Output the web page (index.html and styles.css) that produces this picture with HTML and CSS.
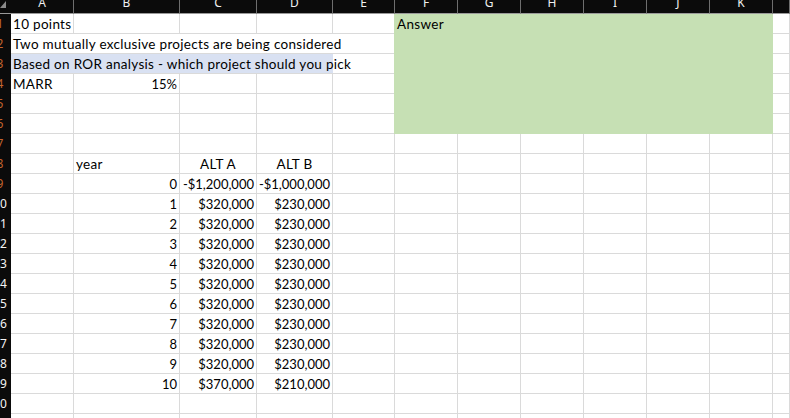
FILE: index.html
```html
<!DOCTYPE html>
<html>
<head>
<meta charset="utf-8">
<link rel="stylesheet" href="styles.css">
</head>
<body>
<div class="sheet">
  <div class="corner"><svg width="11" height="13" viewBox="0 0 11 13"><polygon points="0,8 6,8 6,1" fill="#8a8a8a"/></svg></div>
  <div class="ch"><span>A</span></div>
  <div class="ch"><span>B</span></div>
  <div class="ch"><span>C</span></div>
  <div class="ch"><span>D</span></div>
  <div class="ch"><span>E</span></div>
  <div class="ch"><span>F</span></div>
  <div class="ch"><span>G</span></div>
  <div class="ch"><span>H</span></div>
  <div class="ch"><span>I</span></div>
  <div class="ch"><span>J</span></div>
  <div class="ch"><span>K</span></div>
  <div class="ch"></div>

  <div class="rh s"><span class="n">1</span></div>
  <div class="c">10 points</div><div class="c"></div><div class="c"></div><div class="c"></div><div class="c"></div>
  <div class="ans">Answer</div>
  <div class="c"></div>

  <div class="rh s"><span class="n">2</span></div>
  <div class="c wide">Two mutually exclusive projects are being considered</div>
  <div class="c"></div>

  <div class="rh s"><span class="n">3</span></div>
  <div class="c wide hl">Based on ROR analysis - which project should you pick</div>
  <div class="c"></div>

  <div class="rh s"><span class="n">4</span></div>
  <div class="c">MARR</div><div class="c r">15%</div><div class="c"></div><div class="c"></div><div class="c"></div>
  <div class="c"></div>

  <div class="rh s"><span class="n">5</span></div>
  <div class="c"></div><div class="c"></div><div class="c"></div><div class="c"></div><div class="c"></div>
  <div class="c"></div>

  <div class="rh s"><span class="n">6</span></div>
  <div class="c"></div><div class="c"></div><div class="c"></div><div class="c"></div><div class="c"></div>
  <div class="c"></div>

  <div class="rh s"><span class="n">7</span></div>
  <div class="c"></div><div class="c"></div><div class="c"></div><div class="c"></div><div class="c"></div><div class="c"></div>
  <div class="c"></div><div class="c"></div><div class="c"></div><div class="c"></div><div class="c"></div><div class="c"></div>

  <div class="rh s"><span class="n">8</span></div>
  <div class="c"></div><div class="c">year</div><div class="c m">ALT A</div><div class="c m">ALT B</div>
  <div class="c"></div><div class="c"></div><div class="c"></div><div class="c"></div><div class="c"></div><div class="c"></div><div class="c"></div><div class="c"></div>

  <div class="rh s"><span class="n">9</span></div>
  <div class="c"></div><div class="c r">0</div><div class="c r">-$1,200,000</div><div class="c r">-$1,000,000</div>
  <div class="c"></div><div class="c"></div><div class="c"></div><div class="c"></div><div class="c"></div><div class="c"></div><div class="c"></div><div class="c"></div>

  <div class="rh"><span class="n">10</span></div>
  <div class="c"></div><div class="c r">1</div><div class="c r">$320,000</div><div class="c r">$230,000</div>
  <div class="c"></div><div class="c"></div><div class="c"></div><div class="c"></div><div class="c"></div><div class="c"></div><div class="c"></div><div class="c"></div>

  <div class="rh"><span class="n">11</span></div>
  <div class="c"></div><div class="c r">2</div><div class="c r">$320,000</div><div class="c r">$230,000</div>
  <div class="c"></div><div class="c"></div><div class="c"></div><div class="c"></div><div class="c"></div><div class="c"></div><div class="c"></div><div class="c"></div>

  <div class="rh"><span class="n">12</span></div>
  <div class="c"></div><div class="c r">3</div><div class="c r">$320,000</div><div class="c r">$230,000</div>
  <div class="c"></div><div class="c"></div><div class="c"></div><div class="c"></div><div class="c"></div><div class="c"></div><div class="c"></div><div class="c"></div>

  <div class="rh"><span class="n">13</span></div>
  <div class="c"></div><div class="c r">4</div><div class="c r">$320,000</div><div class="c r">$230,000</div>
  <div class="c"></div><div class="c"></div><div class="c"></div><div class="c"></div><div class="c"></div><div class="c"></div><div class="c"></div><div class="c"></div>

  <div class="rh"><span class="n">14</span></div>
  <div class="c"></div><div class="c r">5</div><div class="c r">$320,000</div><div class="c r">$230,000</div>
  <div class="c"></div><div class="c"></div><div class="c"></div><div class="c"></div><div class="c"></div><div class="c"></div><div class="c"></div><div class="c"></div>

  <div class="rh"><span class="n">15</span></div>
  <div class="c"></div><div class="c r">6</div><div class="c r">$320,000</div><div class="c r">$230,000</div>
  <div class="c"></div><div class="c"></div><div class="c"></div><div class="c"></div><div class="c"></div><div class="c"></div><div class="c"></div><div class="c"></div>

  <div class="rh"><span class="n">16</span></div>
  <div class="c"></div><div class="c r">7</div><div class="c r">$320,000</div><div class="c r">$230,000</div>
  <div class="c"></div><div class="c"></div><div class="c"></div><div class="c"></div><div class="c"></div><div class="c"></div><div class="c"></div><div class="c"></div>

  <div class="rh"><span class="n">17</span></div>
  <div class="c"></div><div class="c r">8</div><div class="c r">$320,000</div><div class="c r">$230,000</div>
  <div class="c"></div><div class="c"></div><div class="c"></div><div class="c"></div><div class="c"></div><div class="c"></div><div class="c"></div><div class="c"></div>

  <div class="rh"><span class="n">18</span></div>
  <div class="c"></div><div class="c r">9</div><div class="c r">$320,000</div><div class="c r">$230,000</div>
  <div class="c"></div><div class="c"></div><div class="c"></div><div class="c"></div><div class="c"></div><div class="c"></div><div class="c"></div><div class="c"></div>

  <div class="rh"><span class="n">19</span></div>
  <div class="c"></div><div class="c r">10</div><div class="c r">$370,000</div><div class="c r">$210,000</div>
  <div class="c"></div><div class="c"></div><div class="c"></div><div class="c"></div><div class="c"></div><div class="c"></div><div class="c"></div><div class="c"></div>

  <div class="rh"><span class="n">20</span></div>
  <div class="c"></div><div class="c"></div><div class="c"></div><div class="c"></div><div class="c"></div><div class="c"></div>
  <div class="c"></div><div class="c"></div><div class="c"></div><div class="c"></div><div class="c"></div><div class="c"></div>

  <div class="rh"><span class="n">21</span></div>
  <div class="c"></div><div class="c"></div><div class="c"></div><div class="c"></div><div class="c"></div><div class="c"></div>
  <div class="c"></div><div class="c"></div><div class="c"></div><div class="c"></div><div class="c"></div><div class="c"></div>
</div>
</body>
</html>
```

FILE: styles.css
```css
* { box-sizing: border-box; }
html, body { margin: 0; padding: 0; background: #fff; }
body { width: 790px; height: 418px; overflow: hidden; }

.sheet {
  display: grid;
  grid-template-columns: 11px 63px 106px 77px 76px 62px repeat(6, 63px) 1fr;
  grid-template-rows: 14px repeat(21, 20px);
  font-family: Lato, "Liberation Sans", sans-serif;
  font-size: 13.5px;
  letter-spacing: 0.3px;
  color: #000;
}

.corner {
  background: #0b0b0b;
  border-bottom: 1px solid #9a9a9a;
  overflow: hidden;
}
.corner svg { display: block; }

.ch {
  background: #0b0b0b;
  color: #f0f0f0;
  border-right: 1px solid #6e6e6e;
  border-bottom: 1px solid #9a9a9a;
  font-family: "Noto Sans", sans-serif;
  font-size: 12px;
  letter-spacing: 0;
  line-height: 12px;
  display: flex;
  align-items: flex-end;
  justify-content: center;
  padding-bottom: 4px;
  overflow: hidden;
}

.rh {
  background: #0b0b0b;
  color: #f4f4f4;
  border-bottom: 1px solid #0b0b0b;
  font-family: "Noto Sans", sans-serif;
  font-size: 12px;
  letter-spacing: 0;
  line-height: 14px;
  display: flex;
  align-items: flex-end;
  padding-bottom: 2px;
  overflow: hidden;
}
.rh .n {
  flex: none;
  width: 30px;
  margin-left: -15px;
  text-align: center;
}
.rh.s { color: #c4652f; }

.c {
  border-right: 1px solid #dadada;
  border-bottom: 1px solid #dadada;
  line-height: 16px;
  padding: 0 2px 1px 2px;
  display: flex;
  align-items: flex-end;
  white-space: nowrap;
  min-width: 0;
}
.c.r {
  justify-content: flex-end;
  font-size: 13px;
  letter-spacing: 0;
}
.c.m { justify-content: center; }
.c.wide { grid-column: span 5; }
.c.hl { background: linear-gradient(to right, #d9e1f2 0, #d9e1f2 322px, transparent 322px); }

.ans {
  grid-column: 7 / span 6;
  grid-row: 2 / span 6;
  margin-left: -1px;
  z-index: 1;
  background: #c6e0b4;
  line-height: 16px;
  padding: 2px 3px 0 3px;
}
```
